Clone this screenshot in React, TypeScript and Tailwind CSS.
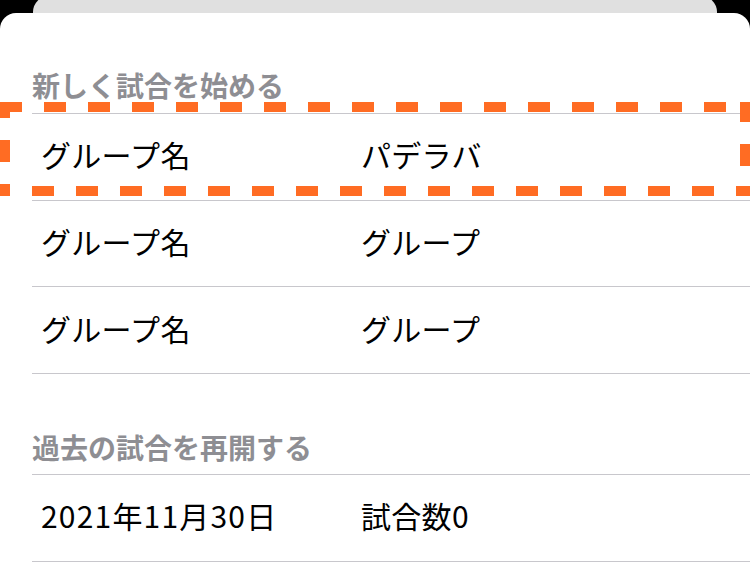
import React from 'react';

const font = { fontFamily: '"Noto Sans CJK JP", "Noto Sans", sans-serif' };

const newGames = [
  { name: 'グループ名', group: 'パデラバ' },
  { name: 'グループ名', group: 'グループ' },
  { name: 'グループ名', group: 'グループ' },
];

const pastGames = [{ date: '2021年11月30日', count: '試合数0' }];

// dashed highlight around the first row
function Highlight() {
  return (
    <svg
      className="absolute left-0 top-[102px] pointer-events-none"
      width={750}
      height={94}
      viewBox="0 0 750 94"
      overflow="hidden"
    >
      <g stroke="#ff6c23" strokeWidth={10} strokeDasharray="22 22" fill="none">
        <line x1={0} y1={5} x2={760} y2={5} />
        <line x1={745} y1={-2} x2={745} y2={100} />
        <line x1={-12} y1={89} x2={760} y2={89} />
        <line x1={5} y1={-6} x2={5} y2={100} />
      </g>
    </svg>
  );
}

function Row({ left, right, wide }: { left: string; right: string; wide?: boolean }) {
  return (
    <div className="flex items-center h-[86.7px] pb-[5px] border-b border-[#c8c7cc] pl-[9px] text-[30px] text-black leading-none">
      <span className={wide ? 'w-[320px] shrink-0 tracking-[1.2px]' : 'w-[320px] shrink-0 tracking-[0.3px]'}>{left}</span>
      <span className="tracking-[0.3px]">{right}</span>
    </div>
  );
}

export default function App() {
  return (
    <div className="w-[750px] h-[585px] bg-black overflow-hidden relative" style={font}>
      {/* card behind the sheet */}
      <div className="h-[13px] overflow-hidden px-[33px]">
        <div className="h-[20px] -mt-[4px] bg-[#e0e0e0] rounded-t-[16px]" />
      </div>

      <div className="bg-white rounded-t-[16px] h-[572px] pt-[54px]">
        <div className="ml-[32px]">
          <div className="h-[47px] border-b border-[#c8c7cc] text-[28px] font-bold text-[#8e8e93] leading-[36px]">
            新しく試合を始める
          </div>
          {newGames.map((g, i) => (
            <Row key={i} left={g.name} right={g.group} />
          ))}

          <div className="h-[101px] pt-[55px] border-b border-[#c8c7cc] text-[28px] font-bold text-[#8e8e93] leading-[36px]">
            過去の試合を再開する
          </div>
          {pastGames.map((g, i) => (
            <Row key={i} left={g.date} right={g.count} wide />
          ))}
        </div>
      </div>

      <Highlight />
    </div>
  );
}
